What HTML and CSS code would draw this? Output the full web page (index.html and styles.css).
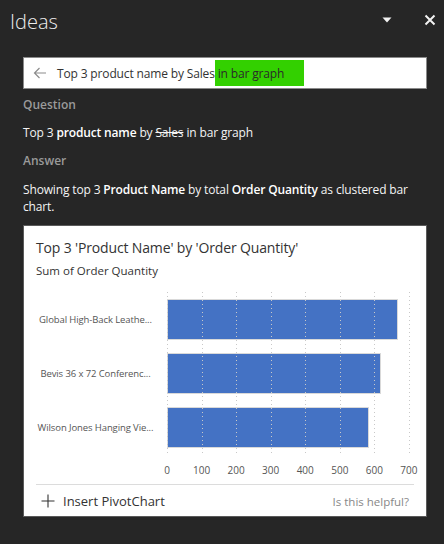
FILE: index.html
```html
<!DOCTYPE html>
<html>
<head>
<meta charset="utf-8">
<link rel="stylesheet" href="styles.css">
</head>
<body>
<div class="pane">
  <header class="header">
    <div class="title">Ideas</div>
    <div class="header-icons">
      <svg class="icon-drop" width="10" height="6" viewBox="0 0 10 6"><path d="M0.5 0.5 L9.5 0.5 L5 5.5 Z" fill="#f2f2f2"/></svg>
      <svg class="icon-close" width="12" height="12" viewBox="0 0 12 12"><path d="M1.5 1.5 L10.5 10.5 M10.5 1.5 L1.5 10.5" stroke="#f2f2f2" stroke-width="2" fill="none"/></svg>
    </div>
  </header>
  <div class="content">
    <div class="search">
      <svg class="icon-back" width="14" height="12" viewBox="0 0 14 12"><path d="M13 6 H1.5 M6.5 1 L1.5 6 L6.5 11" stroke="#8c8c8c" stroke-width="1.2" fill="none"/></svg>
      <span class="search-text">Top 3 product name by Sales<span class="hl"> in bar graph</span></span>
    </div>
    <div class="label">Question</div>
    <div class="text q">Top 3 <b>product name</b> by <s>Sales</s> in bar graph</div>
    <div class="label">Answer</div>
    <div class="text a">Showing top 3 <b>Product Name</b> by total <b>Order Quantity</b> as clustered bar chart.</div>
    <div class="card">
      <div class="card-title">Top 3 'Product Name' by 'Order Quantity'</div>
      <div class="card-sub">Sum of Order Quantity</div>
      <div class="chart">
        <div class="cats">
          <div class="cat">Global High-Back Leathe...</div>
          <div class="cat">Bevis 36 x 72 Conferenc...</div>
          <div class="cat">Wilson Jones Hanging Vie...</div>
        </div>
        <div class="plot-wrap">
          <div class="plot">
            <div class="gridlines"></div>
            <div class="bar-row r1"><div class="bar" style="width:95.4%"></div></div>
            <div class="bar-row r2"><div class="bar" style="width:88.3%"></div></div>
            <div class="bar-row r3"><div class="bar" style="width:83.4%"></div></div>
          </div>
          <div class="axis">
            <span>0</span><span>100</span><span>200</span><span>300</span><span>400</span><span>500</span><span>600</span><span>700</span>
          </div>
        </div>
      </div>
      <div class="card-foot">
        <div class="insert">
          <svg class="icon-plus" width="14" height="14" viewBox="0 0 14 14"><path d="M7 0.5 V13.5 M0.5 7 H13.5" stroke="#333" stroke-width="1.1" fill="none"/></svg>
          <span>Insert PivotChart</span>
        </div>
        <div class="helpful">Is this helpful?</div>
      </div>
    </div>
  </div>
</div>
</body>
</html>
```
FILE: styles.css
```css
* { box-sizing: border-box; }
html, body {
  margin: 0;
  padding: 0;
  background: #262626;
  height: 100%;
}
body {
  font-family: "Open Sans", "Noto Sans", "DejaVu Sans", sans-serif;
  color: #f2f2f2;
  width: 444px;
  height: 544px;
  overflow: hidden;
}
.header {
  height: 44px;
  display: flex;
  align-items: center;
  justify-content: space-between;
  padding: 0 8px 0 10px;
}
.title {
  font-size: 20px;
  font-weight: 300;
  color: #ededed;
  line-height: 44px;
}
.header-icons {
  display: flex;
  align-items: center;
  gap: 32px;
  margin-top: -5px;
}
.icon-drop { display: block; }
.icon-close { display: block; }
.content {
  padding: 13px 17px 0 23px;
}
.search {
  height: 32px;
  background: #fff;
  border: 1px solid #8a8a8a;
  display: flex;
  align-items: center;
  padding-left: 9px;
}
.icon-back { display: block; margin-right: 10px; }
.search-text {
  font-size: 12px;
  color: #333;
  letter-spacing: -0.15px;
}
.hl {
  background: #33d000;
  color: #2a2a2a;
  padding: 5px 20px 4px 0;
}
.label {
  margin-top: 6px;
  line-height: 20px;
  font-size: 12px;
  font-weight: 600;
  color: #9a9a9a;
}
.text {
  font-size: 12px;
  color: #f4f4f4;
  letter-spacing: -0.15px;
}
.text b { font-weight: 600; color: #fff; }
.q {
  margin-top: 8px;
  line-height: 20px;
  margin-bottom: 8px;
}
.a {
  margin-top: 10px;
  line-height: 17px;
}
.card {
  margin-top: 10px;
  height: 292px;
  background: #fff;
  border: 1px solid #5a5a5a;
  padding: 12px 12px 0 12px;
  color: #333;
}
.card-title {
  font-size: 14px;
  line-height: 20px;
  color: #333;
  letter-spacing: -0.15px;
}
.card-sub {
  margin-top: 4px;
  font-size: 11.5px;
  line-height: 18px;
  color: #333;
}
.chart {
  display: flex;
  margin-top: 12px;
  gap: 12px;
}
.cats {
  width: 119px;
  display: flex;
  flex-direction: column;
}
.cat {
  height: 54px;
  display: flex;
  align-items: center;
  justify-content: center;
  font-size: 9.5px;
  color: #555;
  white-space: nowrap;
  letter-spacing: -0.1px;
}
.plot-wrap { width: 247px; }
.plot {
  width: 243px;
  display: grid;
  grid-template-columns: 243px;
  grid-template-rows: repeat(3, 54px);
}
.gridlines {
  grid-column: 1;
  grid-row: 1 / 4;
  background: repeating-linear-gradient(to right, #c8c8c8 0 1px, transparent 1px 34.57px);
  -webkit-mask-image: repeating-linear-gradient(to bottom, #000 0 1px, transparent 1px 4px);
  mask-image: repeating-linear-gradient(to bottom, #000 0 1px, transparent 1px 4px);
}
.bar-row {
  grid-column: 1;
  display: flex;
  align-items: center;
  width: 242px;
}
.r1 { grid-row: 1; }
.r2 { grid-row: 2; }
.r3 { grid-row: 3; }
.bar {
  height: 41px;
  background: #4472c4;
  border: 1px solid #d9d9d9;
}
.axis {
  margin-top: 8px;
  margin-left: -17.3px;
  display: grid;
  grid-template-columns: repeat(8, 34.57px);
  line-height: 16px;
  font-size: 10px;
  color: #555;
}
.axis span { text-align: center; }
.card-foot {
  margin-top: 6px;
  border-top: 1px solid #dcdcdc;
  height: 33px;
  display: flex;
  align-items: center;
  justify-content: space-between;
  padding: 0 5px 0 5px;
}
.insert {
  display: flex;
  align-items: center;
  gap: 8px;
  font-size: 13px;
  color: #333;
}
.icon-plus { display: block; }
.helpful {
  font-size: 11.5px;
  color: #888;
}
```
